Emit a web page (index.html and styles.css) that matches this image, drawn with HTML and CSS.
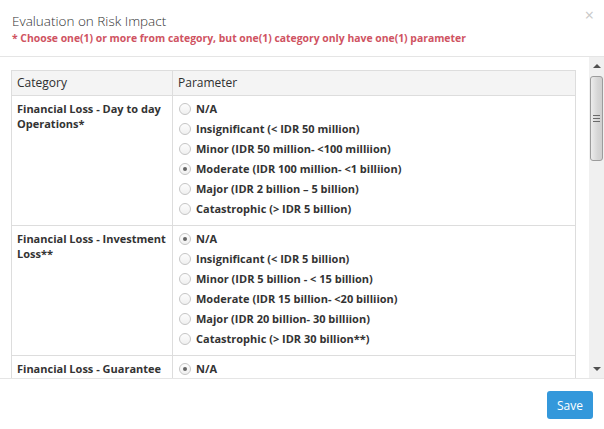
FILE: index.html
```html
<!DOCTYPE html>
<html>
<head>
<meta charset="utf-8">
<link rel="stylesheet" href="styles.css">
</head>
<body>
<div class="modal">
  <div class="modal-header">
    <div class="header-text">
      <h4 class="modal-title">Evaluation on Risk Impact</h4>
      <p class="note">* Choose one(1) or more from category, but one(1) category only have one(1) parameter</p>
    </div>
    <button class="close" type="button">&times;</button>
  </div>
  <div class="modal-body">
    <div class="body-content">
      <table class="risk-table">
        <thead>
          <tr><th class="col-cat">Category</th><th>Parameter</th></tr>
        </thead>
        <tbody>
          <tr>
            <td class="cat">Financial Loss - Day to day Operations*</td>
            <td class="params">
              <label class="opt"><input type="radio" name="r1"><span>N/A</span></label>
              <label class="opt"><input type="radio" name="r1"><span>Insignificant (&lt; IDR 50 million)</span></label>
              <label class="opt"><input type="radio" name="r1"><span>Minor (IDR 50 million- &lt;100 milliion)</span></label>
              <label class="opt"><input type="radio" name="r1" checked><span>Moderate (IDR 100 million- &lt;1 billiion)</span></label>
              <label class="opt"><input type="radio" name="r1"><span>Major (IDR 2 billion – 5 billion)</span></label>
              <label class="opt"><input type="radio" name="r1"><span>Catastrophic (&gt; IDR 5 billion)</span></label>
            </td>
          </tr>
          <tr>
            <td class="cat">Financial Loss - Investment Loss**</td>
            <td class="params">
              <label class="opt"><input type="radio" name="r2" checked><span>N/A</span></label>
              <label class="opt"><input type="radio" name="r2"><span>Insignificant (&lt; IDR 5 billion)</span></label>
              <label class="opt"><input type="radio" name="r2"><span>Minor (IDR 5 billion - &lt; 15 billion)</span></label>
              <label class="opt"><input type="radio" name="r2"><span>Moderate (IDR 15 billion- &lt;20 billiion)</span></label>
              <label class="opt"><input type="radio" name="r2"><span>Major (IDR 20 billion- 30 billiion)</span></label>
              <label class="opt"><input type="radio" name="r2"><span>Catastrophic (&gt; IDR 30 billion**)</span></label>
            </td>
          </tr>
          <tr>
            <td class="cat">Financial Loss - Guarantee</td>
            <td class="params">
              <label class="opt"><input type="radio" name="r3" checked><span>N/A</span></label>
            </td>
          </tr>
        </tbody>
      </table>
    </div>
    <div class="scrollbar">
      <div class="sb-btn sb-up"></div>
      <div class="sb-thumb"><span class="grip"></span></div>
      <div class="sb-track"></div>
      <div class="sb-btn sb-down"></div>
    </div>
  </div>
  <div class="modal-footer">
    <button class="btn-save" type="button">Save</button>
  </div>
</div>
</body>
</html>
```

FILE: styles.css
```css
* { box-sizing: border-box; }
html, body { margin: 0; padding: 0; background: #fff; }
body {
  font-family: "Open Sans", "DejaVu Sans", sans-serif;
  color: #333;
  width: 604px;
  height: 429px;
  overflow: hidden;
}
.modal { display: flex; flex-direction: column; width: 604px; }

.modal-header {
  height: 57px;
  border-bottom: 1px solid #e5e5e5;
  padding: 12px 12px 0 12px;
  display: flex;
  justify-content: space-between;
  align-items: flex-start;
}
.modal-title {
  margin: 0;
  font-size: 13.5px;
  font-weight: 300;
  line-height: 19px;
  color: #333;
}
.note {
  margin: 0;
  font-size: 10.4px;
  font-weight: 700;
  line-height: 15px;
  color: #cf5362;
}
.close {
  border: 0;
  background: none;
  padding: 0;
  margin: -7px -2px 0 0;
  font-family: "Open Sans", sans-serif;
  font-size: 16px;
  line-height: 20px;
  color: #c8c8c8;
}

.modal-body {
  display: flex;
  height: 321px;
}
.body-content {
  flex: 1;
  overflow: hidden;
  padding: 13px 13px 0 11px;
}
.risk-table {
  width: 100%;
  border-collapse: collapse;
  font-size: 11px;
}
.risk-table th, .risk-table td {
  border: 1px solid #dddddd;
  text-align: left;
  vertical-align: top;
}
.risk-table th {
  background: #f4f4f4;
  font-size: 12px;
  font-weight: 400;
  height: 25px;
  padding: 3px 5px 0 5px;
  line-height: 18px;
  color: #2f2f2f;
}
.col-cat { width: 161px; }
.cat {
  font-weight: 700;
  line-height: 15px;
  padding: 5px 5px 0 5px;
}
.params {
  padding: 3px 6px 6px 6px;
}
.opt {
  display: flex;
  align-items: center;
  height: 20px;
  font-weight: 700;
  line-height: 20px;
}
.opt input {
  appearance: none;
  -webkit-appearance: none;
  width: 12px;
  height: 12px;
  margin: 0 5px 0 0;
  border: 1px solid #c6c6c6;
  border-radius: 50%;
  background: linear-gradient(#fdfdfd, #f0f0f0);
  flex: none;
  display: grid;
  place-content: center;
}
.opt input:checked::before {
  content: "";
  width: 4px;
  height: 4px;
  border-radius: 50%;
  background: #666;
}

.scrollbar {
  width: 15px;
  background: #f0f0f0;
  display: flex;
  flex-direction: column;
  padding: 0 1px 1px 1px;
}
.sb-btn {
  height: 17px;
  flex: none;
  display: flex;
  justify-content: center;
  align-items: center;
}
.sb-up::before, .sb-down::before {
  content: "";
  width: 0;
  height: 0;
  border-left: 4px solid transparent;
  border-right: 4px solid transparent;
}
.sb-up::before { border-bottom: 4px solid #505050; }
.sb-down::before { border-top: 4px solid #505050; }
.sb-thumb {
  height: 85px;
  margin-top: 2px;
  flex: none;
  border: 1px solid #9c9c9c;
  border-radius: 3px;
  background: linear-gradient(to right, #ececec, #d6d6d6 60%, #cfcfcf);
  display: flex;
  justify-content: center;
  align-items: center;
}
.grip {
  width: 7px;
  height: 7px;
  background: repeating-linear-gradient(to bottom, #6a6a6a 0 1px, transparent 1px 3px);
}
.sb-track { flex: 1; }

.modal-footer {
  border-top: 1px solid #e5e5e5;
  height: 51px;
  padding: 12px 11px 0 0;
  display: flex;
  justify-content: flex-end;
  align-items: flex-start;
}
.btn-save {
  width: 46px;
  height: 28px;
  border: 0;
  border-radius: 3px;
  background: #3498db;
  color: #fff;
  font-family: "Open Sans", sans-serif;
  font-size: 12px;
  padding: 0;
}
```
